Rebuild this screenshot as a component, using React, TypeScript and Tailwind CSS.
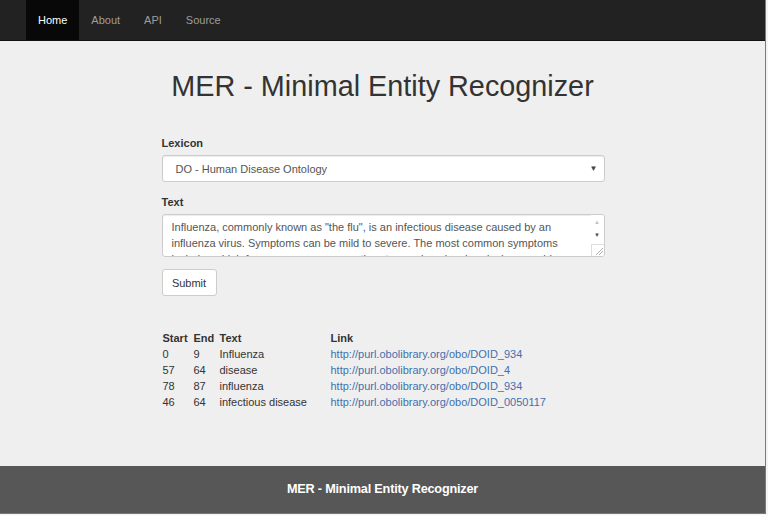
import React from "react";

const rows = [
  { start: "0", end: "9", text: "Influenza", link: "http://purl.obolibrary.org/obo/DOID_934" },
  { start: "57", end: "64", text: "disease", link: "http://purl.obolibrary.org/obo/DOID_4" },
  { start: "78", end: "87", text: "influenza", link: "http://purl.obolibrary.org/obo/DOID_934" },
  { start: "46", end: "64", text: "infectious disease", link: "http://purl.obolibrary.org/obo/DOID_0050117" },
];

const navItems = ["Home", "About", "API", "Source"];

export default function App() {
  return (
    <div className="w-[768px] h-[515px] bg-[#f4f4f4] overflow-hidden font-['Liberation_Sans',Arial,sans-serif] text-[11px] leading-[16px] text-[#333]">
      <div className="w-[766px] h-[514px] border-r border-b border-[#7a7a7a] flex flex-col bg-[#efefef]">
        {/* Navbar */}
        <nav className="h-[41px] bg-[#222] border-b border-[#101010] flex pl-[26px] shrink-0">
          {navItems.map((item, i) => (
            <a
              key={item}
              className={
                i === 0
                  ? "px-3 flex items-center bg-[#080808] text-white"
                  : "px-3 flex items-center text-[#9d9d9d]"
              }
            >
              {item}
            </a>
          ))}
        </nav>

        {/* Main */}
        <main className="flex-1 flex flex-col items-center">
          <h1 className="mt-[29px] text-[28.8px] leading-[32px] text-[#333]">
            MER - Minimal Entity Recognizer
          </h1>

          <div className="w-[443px] mt-[33px] ml-[1px]">
            <label className="block font-bold">Lexicon</label>
            <div className="mt-1 h-[27px] bg-white border border-[#ccc] rounded-[3px] flex items-center justify-between pl-[13px] pr-[6px] shadow-[inset_0_1px_1px_rgba(0,0,0,0.075)]">
              <span className="text-[#555]">DO - Human Disease Ontology</span>
              <span className="text-[8px] text-[#444]">▼</span>
            </div>

            <label className="block font-bold mt-3">Text</label>
            <div className="mt-1 h-[43px] bg-white border border-[#ccc] rounded-[3px] flex overflow-hidden shadow-[inset_0_1px_1px_rgba(0,0,0,0.075)]">
              <div className="flex-1 pl-[9px] pr-2 pt-[4px] text-[#555] overflow-hidden">
                Influenza, commonly known as "the flu", is an infectious disease caused by an
                influenza virus. Symptoms can be mild to severe. The most common symptoms
                include: a high fever, runny nose, sore throat, muscle pains, headache, coughing
              </div>
              <div className="w-[13px] flex flex-col items-center bg-white">
                <span className="text-[6px] leading-[8px] text-[#c4c4c4] mt-[3px]">▲</span>
                <span className="text-[6px] leading-[8px] text-[#505050] mt-[5px]">▼</span>
                <div className="mt-auto w-[13px] h-[12px] border-t border-l border-[#ddd] relative overflow-hidden">
                  <svg width="12" height="11" viewBox="0 0 12 11" className="absolute right-0 bottom-0">
                    <line x1="11" y1="3" x2="4" y2="10" stroke="#999" strokeWidth="0.8" />
                    <line x1="11" y1="6" x2="7" y2="10" stroke="#999" strokeWidth="0.8" />
                  </svg>
                </div>
              </div>
            </div>

            <button className="mt-3 h-[27px] w-[55px] bg-white border border-[#ccc] rounded-[3px] text-[#333]">
              Submit
            </button>

            <table className="mt-[34px] ml-[1px] border-collapse">
              <thead>
                <tr className="font-bold">
                  <td className="w-[31px] p-0">Start</td>
                  <td className="w-[26px] p-0">End</td>
                  <td className="w-[111px] p-0">Text</td>
                  <td className="p-0">Link</td>
                </tr>
              </thead>
              <tbody>
                {rows.map((r) => (
                  <tr key={r.link + r.start}>
                    <td className="p-0">{r.start}</td>
                    <td className="p-0">{r.end}</td>
                    <td className="p-0">{r.text}</td>
                    <td className="p-0">
                      <a className="text-[#3f70ae]">{r.link}</a>
                    </td>
                  </tr>
                ))}
              </tbody>
            </table>
          </div>
        </main>

        {/* Footer */}
        <footer className="h-[47px] bg-[#575757] flex items-center justify-center shrink-0">
          <span className="text-white font-bold text-[12.7px] tracking-[-0.2px] mt-[-2px]">MER - Minimal Entity Recognizer</span>
        </footer>
      </div>
    </div>
  );
}
